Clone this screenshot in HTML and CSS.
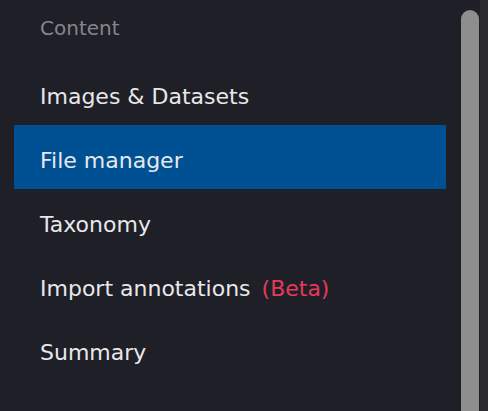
FILE: index.html
```html
<!DOCTYPE html>
<html>
<head>
<meta charset="utf-8">
<link rel="stylesheet" href="styles.css">
</head>
<body>
<div class="frame">
  <nav class="sidebar">
    <div class="section-title">Content</div>
    <ul class="menu">
      <li class="item">Images &amp; Datasets</li>
      <li class="item active">File manager</li>
      <li class="item">Taxonomy</li>
      <li class="item">Import annotations <span class="beta">(Beta)</span></li>
      <li class="item">Summary</li>
    </ul>
  </nav>
  <div class="scrollbar"><div class="thumb"></div></div>
  <div class="edge"></div>
</div>
</body>
</html>
```
FILE: styles.css
```css
html, body {
  margin: 0;
  padding: 0;
  background: #1f1f27;
}
.frame {
  display: flex;
  width: 488px;
  height: 411px;
  overflow: hidden;
  font-family: "DejaVu Sans", "Noto Sans", sans-serif;
}
.sidebar {
  width: 459px;
  flex: none;
  padding-top: 13px;
  box-sizing: border-box;
}
.section-title {
  color: #85868c;
  font-size: 20px;
  line-height: 30px;
  padding-left: 40px;
}
.menu {
  list-style: none;
  margin: 0;
  padding: 0 0 0 14px;
  margin-top: 18px;
}
.item {
  width: 432px;
  height: 64px;
  box-sizing: border-box;
  padding-left: 26px;
  padding-top: 7px;
  display: flex;
  align-items: center;
  color: #e8e8ea;
  font-size: 22px;
}
.item.active {
  background: #005094;
}
.beta {
  color: #e33a5c;
  margin-left: 11px;
}
.scrollbar {
  width: 21px;
  flex: none;
  padding: 10px 2px 0 2px;
  box-sizing: border-box;
}
.thumb {
  width: 18px;
  height: 420px;
  background: #8e8e8e;
  border-radius: 9px 9px 0 0;
}
.edge {
  flex: 1;
  background: #2a2a2f;
}
```
